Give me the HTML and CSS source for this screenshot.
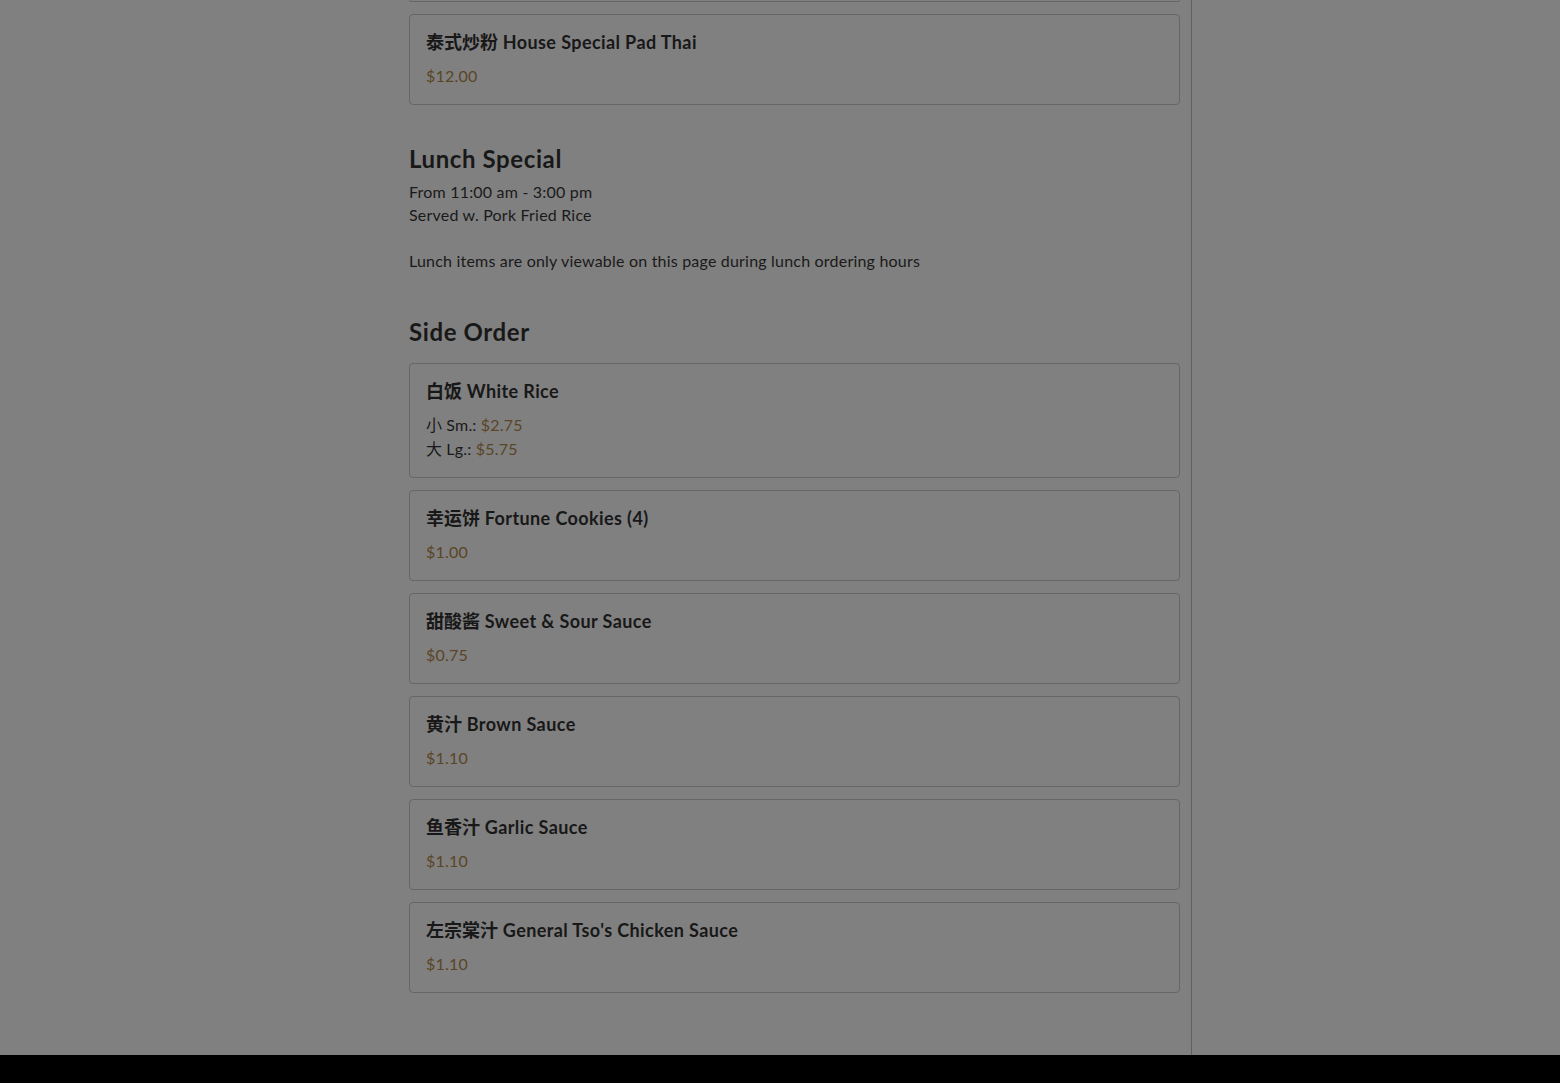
FILE: index.html
```html
<!DOCTYPE html>
<html lang="en">
<head>
<meta charset="utf-8">
<title>Menu</title>
<link rel="stylesheet" href="styles.css">
</head>
<body>
<div class="page">
  <main class="menu">
    <div class="items items-top">
      <div class="card-edge"></div>
      <div class="card">
        <div class="item-name"><span class="zh">泰式炒粉</span> House Special Pad Thai</div>
        <div class="price">$12.00</div>
      </div>
    </div>

    <section class="section">
      <h2 class="section-title">Lunch Special</h2>
      <p class="section-desc">From 11:00 am - 3:00 pm<br>Served w. Pork Fried Rice<br><br>Lunch items are only viewable on this page during lunch ordering hours</p>
    </section>

    <section class="section section-side">
      <h2 class="section-title">Side Order</h2>
      <div class="items">
        <div class="card">
          <div class="item-name"><span class="zh">白饭</span> White Rice</div>
          <div class="price-row"><span class="zh">小</span> Sm.: <span class="price">$2.75</span></div>
          <div class="price-row"><span class="zh">大</span> Lg.: <span class="price">$5.75</span></div>
        </div>
        <div class="card">
          <div class="item-name"><span class="zh">幸运饼</span> Fortune Cookies (4)</div>
          <div class="price">$1.00</div>
        </div>
        <div class="card">
          <div class="item-name"><span class="zh">甜酸酱</span> Sweet &amp; Sour Sauce</div>
          <div class="price">$0.75</div>
        </div>
        <div class="card">
          <div class="item-name"><span class="zh">黄汁</span> Brown Sauce</div>
          <div class="price">$1.10</div>
        </div>
        <div class="card">
          <div class="item-name"><span class="zh">鱼香汁</span> Garlic Sauce</div>
          <div class="price">$1.10</div>
        </div>
        <div class="card">
          <div class="item-name"><span class="zh">左宗棠汁</span> General Tso's Chicken Sauce</div>
          <div class="price">$1.10</div>
        </div>
      </div>
    </section>
  </main>
</div>
<footer class="footer"></footer>
</body>
</html>
```
FILE: styles.css
```css
* { box-sizing: border-box; }

html, body {
  margin: 0;
  padding: 0;
}

body {
  background: #808080;
  font-family: "Lato", "Noto Sans", "Noto Sans CJK SC", sans-serif;
  color: #1a1a1a;
  font-size: 16px;
  letter-spacing: 0.2px;
  overflow: hidden;
  height: 1083px;
  display: flex;
  flex-direction: column;
}

.page {
  flex: 1;
  display: flex;
  justify-content: flex-start;
  overflow: hidden;
}

.menu {
  margin-left: 409px;
  width: 783px;
  padding-right: 11px;
  border-right: 1px solid #606060;
  padding-bottom: 62px;
}

.items {
  display: flex;
  flex-direction: column;
  gap: 12px;
}

.card-edge {
  height: 2px;
  border: 1px solid #666666;
  border-top: none;
  border-radius: 0 0 4px 4px;
}

.card {
  border: 1px solid #666666;
  border-radius: 4px;
  padding: 16px;
  background: #808080;
}

.item-name {
  font-size: 18px;
  font-weight: 700;
  line-height: 22px;
  letter-spacing: 0.4px;
  color: #181818;
  margin-bottom: 11px;
}

.zh {
  font-family: "Noto Sans CJK SC", sans-serif;
  line-height: 1;
  letter-spacing: 0;
}

.price {
  color: #5a4526;
  line-height: 24px;
}

.price-row {
  line-height: 24px;
  color: #1a1a1a;
}

.section {
  margin-top: 39px;
}

.section-side {
  margin-top: 45px;
}

.section-title {
  font-size: 24px;
  line-height: 29px;
  font-weight: 700;
  letter-spacing: 0.6px;
  margin: 0 0 7px 0;
  color: #181818;
}

.section-side .section-title {
  margin-bottom: 17px;
}

.section-desc {
  margin: 0;
  line-height: 23px;
  color: #1a1a1a;
}

.footer {
  height: 28px;
  flex: none;
  background: #000;
}
```
